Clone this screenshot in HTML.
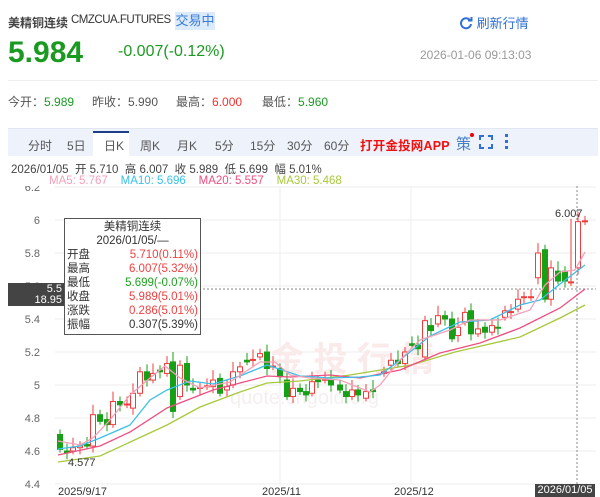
<!DOCTYPE html>
<html><head><meta charset="utf-8"><style>
*{margin:0;padding:0;box-sizing:border-box}
body{width:600px;height:497px;background:#fff;font-family:"Liberation Sans","Noto Sans CJK SC",sans-serif;position:relative;overflow:hidden;color:#333}
.a{position:absolute;white-space:nowrap}
</style></head><body>
<div class="a" style="left:8px;top:14px;font-size:12px;font-weight:bold;color:#444">美精铜连续</div>
<div class="a" style="left:71px;top:14px;font-size:11.5px;color:#333;letter-spacing:-0.5px">CMZCUA.FUTURES</div>
<div class="a" style="left:175px;top:12px;width:40px;height:18px;background:#dcebfb;color:#3a7bd5;font-size:13px;line-height:18px;text-align:center">交易中</div>
<div class="a" style="left:459px;top:13px;font-size:13px;color:#2f6fd6"><svg width="14" height="14" viewBox="0 0 14 14" style="vertical-align:-2px"><path d="M11.5 5A5 5 0 1 0 12 8" fill="none" stroke="#2f6fd6" stroke-width="2"/><path d="M9 4.5h3.5V1" fill="none" stroke="#2f6fd6" stroke-width="2"/></svg> 刷新行情</div>
<div class="a" style="left:8px;top:36px;font-size:30px;font-weight:bold;color:#1b9a22">5.984</div>
<div class="a" style="left:118px;top:43px;font-size:16px;color:#1b9a22">-0.007(-0.12%)</div>
<div class="a" style="left:420px;top:48px;font-size:12px;color:#999">2026-01-06 09:13:03</div>
<div class="a" style="left:8px;top:80px;width:590px;height:1px;background:#eee"></div>
<div class="a" style="left:8px;top:93px;font-size:12px;color:#555">今开：<span style="color:#1b9a22">5.989</span></div>
<div class="a" style="left:92px;top:93px;font-size:12px;color:#555">昨收：5.990</div>
<div class="a" style="left:176px;top:93px;font-size:12px;color:#555">最高：<span style="color:#f23030">6.000</span></div>
<div class="a" style="left:262px;top:93px;font-size:12px;color:#555">最低：<span style="color:#1b9a22">5.960</span></div>
<div class="a" style="left:8px;top:128px;width:590px;height:28px;background:#eef3fb;border-top:1px solid #e2e8f3"></div>
<div class="a" style="left:93px;top:131px;width:36px;height:25px;background:#fff;border-top:2px solid #1e3f8a"></div>
<div class="a" style="top:137px;left:0;font-size:12px;color:#555">
<span class="a" style="left:28px">分时</span><span class="a" style="left:67px">5日</span><span class="a" style="left:104px">日K</span><span class="a" style="left:140px">周K</span><span class="a" style="left:177px">月K</span><span class="a" style="left:215px">5分</span><span class="a" style="left:250px">15分</span><span class="a" style="left:287px">30分</span><span class="a" style="left:324px">60分</span></div>
<div class="a" style="left:360px;top:135px;font-size:12.5px;font-weight:bold;color:#f01010;letter-spacing:0.2px">打开金投网APP</div>
<div class="a" style="left:456px;top:133px;font-size:15px;color:#4a7fc8">策</div>
<div class="a" style="left:470px;top:133px;width:4px;height:4px;border-radius:2px;background:#e00"></div>
<svg class="a" style="left:479px;top:135px" width="14" height="14"><path d="M1 5V1h4M9 1h4v4M13 9v4H9M5 13H1V9" fill="none" stroke="#2f6fd6" stroke-width="2"/></svg>
<div class="a" style="left:505px;top:134px;width:3px;height:3px;background:#2f6fd6;box-shadow:0 6px 0 #2f6fd6,0 12px 0 #2f6fd6"></div>
<div class="a" style="left:11px;top:161px;font-size:11.5px;color:#444">2026/01/05 &nbsp;开 5.710 &nbsp;高 6.007 &nbsp;收 5.989 &nbsp;低 5.699 &nbsp;幅 5.01%</div>
<div class="a" style="left:49px;top:175px;font-size:11.5px"><span style="color:#f5a0b8">MA5: 5.767</span> &nbsp; &nbsp;<span style="color:#39c0e8">MA10: 5.696</span> &nbsp; &nbsp;<span style="color:#ee4f80">MA20: 5.557</span> &nbsp; &nbsp;<span style="color:#a8c83c">MA30: 5.468</span></div>
<svg class="a" style="left:0;top:186px" width="600" height="311" id="ch"></svg>
<div class="a" style="left:8px;top:283px;width:56px;height:23px;background:#444;color:#fff;font-size:11px;text-align:right;line-height:11px;padding-top:1px;padding-right:2px">5.5<br>18.95</div>
<div class="a" style="left:64px;top:218px;width:137px;height:117px;background:#fff;border:1px solid #555;font-size:11.5px;line-height:14px;color:#333;padding:1px 2px">
<div style="text-align:center">美精铜连续</div><div style="text-align:center">2026/01/05/—</div>
<div>开盘<span style="float:right;color:#f04040">5.710(0.11%)</span></div>
<div>最高<span style="float:right;color:#f04040">6.007(5.32%)</span></div>
<div>最低<span style="float:right;color:#20a020">5.699(-0.07%)</span></div>
<div>收盘<span style="float:right;color:#f04040">5.989(5.01%)</span></div>
<div>涨跌<span style="float:right;color:#f04040">0.286(5.01%)</span></div>
<div>振幅<span style="float:right">0.307(5.39%)</span></div></div>
<div class="a" style="left:535px;top:484px;width:60px;height:13px;background:#444;color:#fff;font-size:11px;line-height:13px;text-align:center">2026/01/05</div>
<script>
var s='',o=186;function Y(p){return 385-(p-5)*165-o}
var g=[6.2,6,5.8,5.6,5.4,5.2,5,4.8,4.6,4.4];
g.forEach(function(p){var y=Y(p);s+='<line x1="55" x2="596" y1="'+y+'" y2="'+y+'" stroke="#eee"/><text x="40" y="'+(y+4)+'" font-size="11" fill="#666" text-anchor="end">'+p+'</text>'});
[280,411].forEach(function(x){s+='<line x1="'+x+'" x2="'+x+'" y1="0" y2="298" stroke="#eee"/>'});
s+='<line x1="577" x2="577" y1="0" y2="298" stroke="#888" stroke-dasharray="2,2"/><line x1="55" x2="596" y1="103" y2="103" stroke="#888" stroke-dasharray="2,2"/>';
s+='<text x="270" y="185" font-size="34" fill="#faeaea" font-weight="bold">金 投 行 情</text><text x="230" y="218" font-size="20" fill="#f5f0f0">quote.cngold.org</text>';
var d=[[60,4.7,4.61],[67,4.6,4.59],[73,4.6,4.62],[80,4.62,4.63],[87,4.64,4.63],[93,4.63,4.82],[100,4.82,4.78],[107,4.79,4.76],[113,4.76,4.9],[120,4.9,4.88],[127,4.88,4.885],[133,4.86,4.95],[140,4.95,5.08],[147,5.08,5.03],[153,5.03,5.07],[160,5.09,5.08],[167,5.07,5.13],[173,5.14,4.84],[180,4.93,5.12],[187,5.13,5.0],[193,4.98,4.97],[200,4.98,4.985],[207,4.99,4.995],[213,4.99,5.03],[220,5.04,4.95],[227,4.97,4.99],[233,5.0,5.08],[240,5.08,5.11],[247,5.15,5.14],[253,5.15,5.155],[260,5.17,5.19],[267,5.2,5.1],[273,5.11,5.115],[280,5.1,5.05],[287,5.03,4.93],[293,4.93,4.98],[300,4.98,4.96],[306,4.96,4.94],[312,4.95,5.02],[318,5.03,5.02],[325,5.03,5.035],[331,5.03,5.0],[340,5.0,4.97],[346,4.96,4.93],[352,4.93,4.97],[358,4.97,4.94],[366,4.92,4.96],[373,4.97,4.96],[384,5.07,5.08],[391,5.12,5.15],[398,5.15,5.13],[405,5.13,5.2],[412,5.25,5.24],[418,5.24,5.22],[425,5.17,5.39],[431,5.36,5.33],[438,5.37,5.42],[445,5.42,5.4],[452,5.4,5.28],[458,5.3,5.35],[465,5.38,5.44],[471,5.45,5.31],[478,5.31,5.34],[485,5.35,5.32],[492,5.32,5.36],[498,5.35,5.345],[505,5.41,5.45],[511,5.44,5.445],[518,5.46,5.52],[524,5.53,5.535],[531,5.53,5.535],[538,5.65,5.8],[545,5.82,5.52],[551,5.52,5.71],[558,5.69,5.63],[565,5.69,5.63],[571,5.62,5.625],[578,5.71,5.99],[585,5.99,5.995]];
d.forEach(function(c,i){var up=c[2]>=c[1],col=up?'#f03c3c':'#16a016',hi=Math.max(c[1],c[2])+0.03+(i%3)*0.015,lo=Math.min(c[1],c[2])-0.02-(i%2)*0.02;if(i==76)hi=6.007;
var y1=Y(Math.max(c[1],c[2])),y2=Y(Math.min(c[1],c[2])),h=Math.max(1,y2-y1);
s+='<line x1="'+c[0]+'" x2="'+c[0]+'" y1="'+Y(hi)+'" y2="'+Y(lo)+'" stroke="'+col+'"/>';
s+='<rect x="'+(c[0]-2.5)+'" y="'+y1+'" width="5" height="'+h+'" fill="'+(up?'#fff':col)+'" stroke="'+col+'"/>'});
function L(p,c){var q=p.map(function(v){return v[0]+','+(v[1]-o)}).join(' ');s+='<polyline points="'+q+'" fill="none" stroke="'+c+'" stroke-width="1.3"/>'}
L([[58,462],[100,456],[167,425],[200,407],[240,392],[267,383],[300,381],[350,375],[411,365],[455,352],[520,337],[560,318],[585,305]],'#a8c83c');
L([[58,455],[100,446],[130,432],[167,408],[213,390],[240,383],[267,376],[290,377],[330,375],[360,378],[400,370],[440,353],[480,343],[520,328],[560,308],[585,289]],'#ee4f80');
L([[58,449],[80,446],[100,438],[130,425],[150,400],[167,390],[190,381],[213,384],[240,376],[267,365],[285,371],[300,376],[330,378],[360,377],[380,375],[400,360],[430,336],[460,322],[490,320],[520,305],[540,300],[560,284],[585,265]],'#39c0e8');
L([[58,441],[80,445],[93,438],[110,420],[130,395],[150,378],[165,366],[180,378],[200,388],[230,382],[260,362],[275,362],[290,375],[310,378],[340,380],[370,392],[380,385],[400,360],[420,340],[450,330],[470,320],[500,320],[530,310],[545,285],[560,272],[575,270],[585,252]],'#f5a0b8');
s+='<text x="555" y="31" font-size="11" fill="#333">6.007</text><text x="68" y="280" font-size="11" fill="#333">4.577</text>';
s+='<text x="58" y="309" font-size="11" fill="#333">2025/9/17</text><text x="262" y="309" font-size="11" fill="#333">2025/11</text><text x="394" y="309" font-size="11" fill="#333">2025/12</text>';
document.getElementById('ch').innerHTML=s;
</script>
</body></html>
